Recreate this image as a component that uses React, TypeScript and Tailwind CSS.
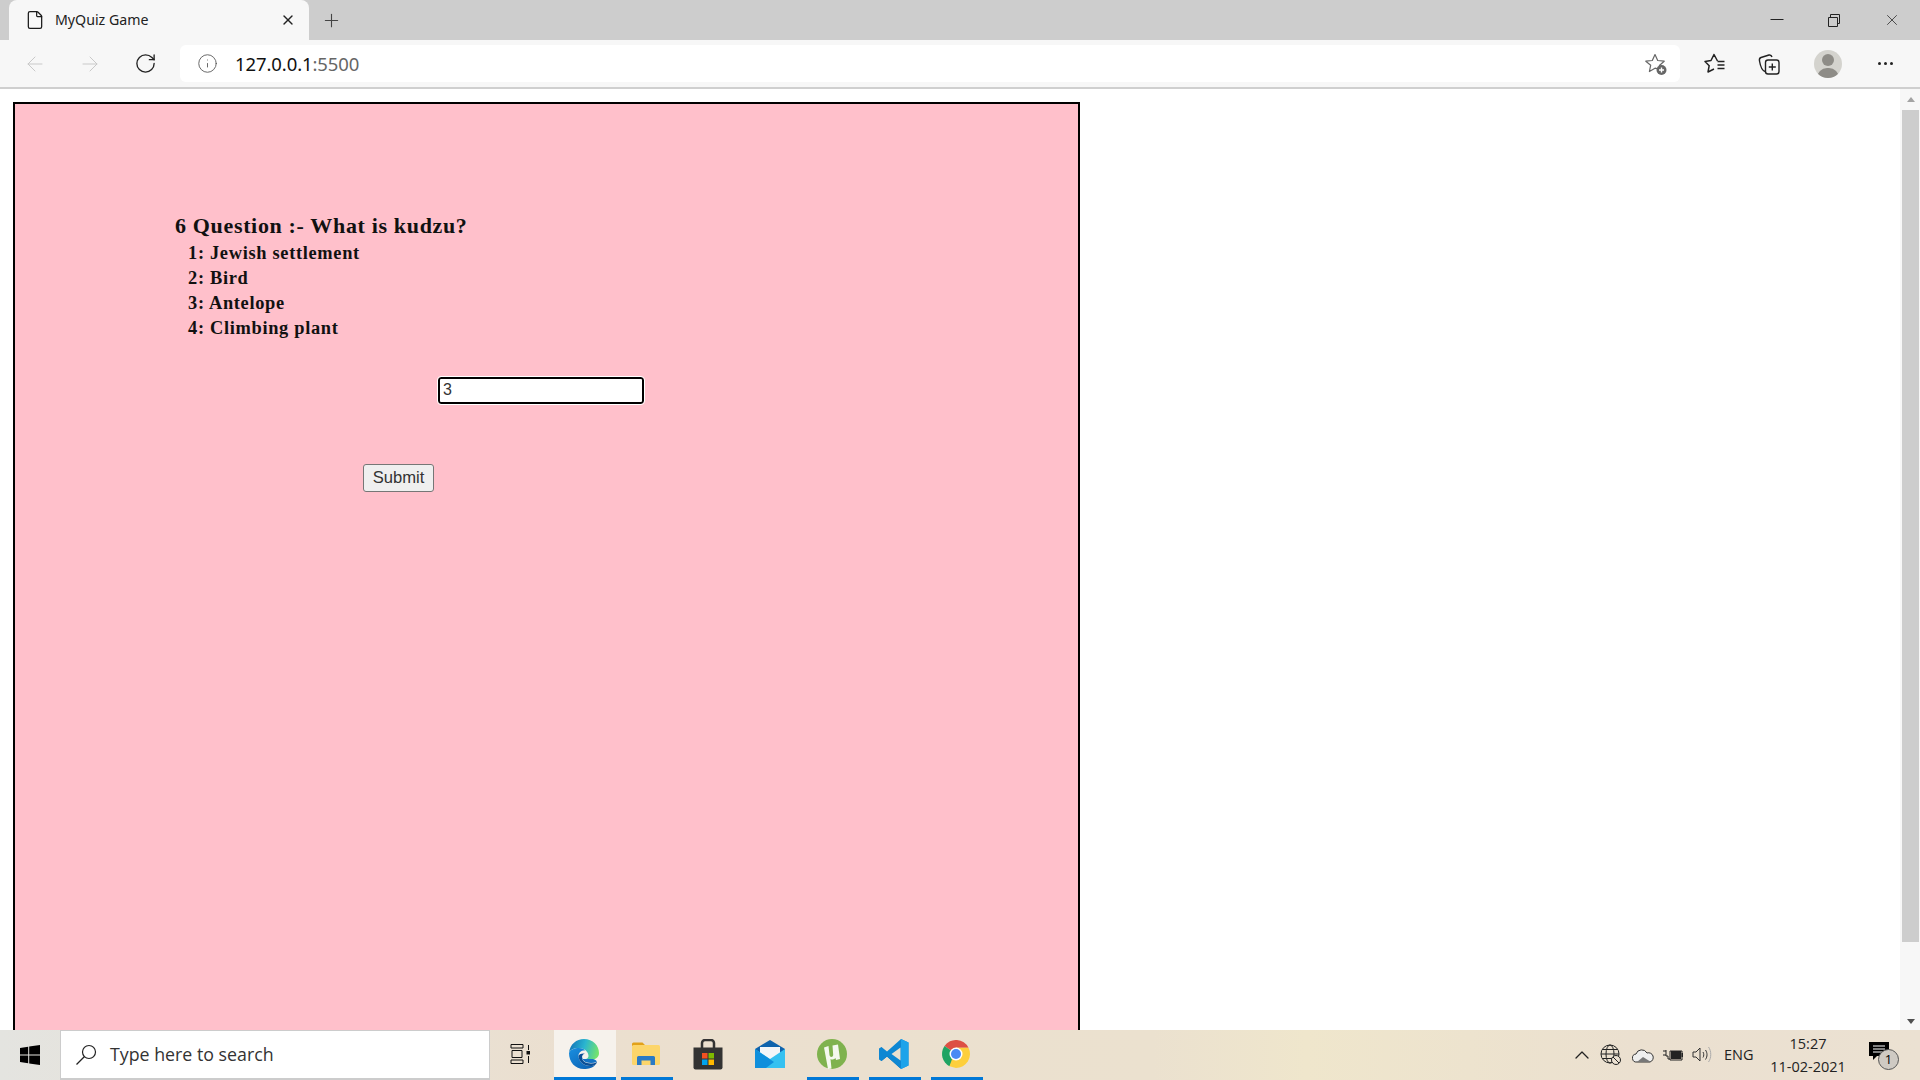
import React from "react";
import { ArrowLeft, ArrowRight, ChevronUp, File, Info, Plus, RotateCw, X } from "lucide-react";

const options = ["1: Jewish settlement", "2: Bird", "3: Antelope", "4: Climbing plant"];

function TabStrip() {
  return (
    <div className="flex h-10 bg-[#cdcdcd] pl-[9px]">
      <div className="flex w-[300px] items-center rounded-t-lg bg-[#f7f7f7] pl-4 pr-[13px]">
        <File size={20} strokeWidth={1.5} className="text-[#1a1a1a]" />
        <span className="ml-[10px] flex-1 text-[14.2px] text-[#222]">MyQuiz Game</span>
        <X size={16} strokeWidth={2} className="text-[#222]" />
      </div>
      <div className="ml-[12px] flex items-center">
        <Plus size={21} strokeWidth={1.25} className="text-[#444]" />
      </div>
      <div className="ml-auto flex items-center text-[#222]">
        <svg width="14" height="14" viewBox="0 0 14 14" className="mr-[43px]">
          <path d="M0.5 6.500h13" stroke="currentColor" strokeWidth="1" />
        </svg>
        <svg width="14" height="14" viewBox="0 0 14 14" className="mr-[42px]">
          <path d="M1.500 4.500h9v9h-9zM3.500 4.500v-3h9v9h-2" fill="none" stroke="currentColor" strokeWidth="1" />
        </svg>
        <X size={18} strokeWidth={1} className="mr-[19px]" />
      </div>
    </div>
  );
}

function Toolbar() {
  return (
    <div className="flex h-[49px] items-start border-b-2 border-[#cfcfcf] bg-[#f7f7f7]">
      <div className="flex h-[47px] w-[180px] items-center pl-[23px]">
        <ArrowLeft size={24} strokeWidth={1} className="text-[#c9c9c9]" />
        <ArrowRight size={24} strokeWidth={1} className="ml-[31px] text-[#c9c9c9]" />
        <RotateCw size={23} strokeWidth={1.4} className="ml-[32px] text-[#222]" />
      </div>
      <div className="mt-[5px] flex h-[37px] w-[1500px] items-center rounded-md bg-white pl-[17px] pr-[12px]">
        <Info size={21} strokeWidth={1} className="text-[#555]" />
        <span className="ml-[17px] flex-1 text-[18.5px] tracking-[-0.1px] text-[#111]">
          127.0.0.1<span className="text-[#666]">:5500</span>
        </span>
        <svg width="24" height="24" viewBox="0 0 24 24" fill="none">
          <path d="M11 2.500l2.700 6 6.500.7-4.800 4.300 1.200 4-5.600-1.300-5.600 3.300 1.300-6.300L1.800 9.200l6.500-.7z" stroke="#666" strokeWidth="1.200" strokeLinejoin="round" />
          <circle cx="17.500" cy="18" r="5" fill="#666" />
          <path d="M15 18h5M17.500 15.500v5" stroke="#fff" strokeWidth="1.400" />
        </svg>
      </div>
      <div className="flex h-[47px] flex-1 items-center pl-[24px] text-[#222]">
        <svg width="22" height="22" viewBox="0 0 22 22" fill="none" stroke="currentColor" strokeWidth="1.500" strokeLinejoin="round">
          <path d="M13.500 8L10 1.500 7 7.500 1 8.500l4.200 4.200L4 19l6-3" />
          <path d="M13.500 8.500h7M13.500 12h7M13.500 15.500h7" />
        </svg>
        <svg width="22" height="24" viewBox="0 0 22 24" fill="none" stroke="currentColor" strokeWidth="1.400" strokeLinejoin="round" className="ml-[32px]">
          <path d="M7 19.500C4 18.500 2.500 15 1.500 9c-.4-2 0-3 1.500-3.500L11 3c1.500-.3 2.500.3 3 2" />
          <rect x="7.500" y="8" width="13.500" height="14" rx="2.500" />
          <path d="M14.300 11.500v7M10.800 15h7" />
        </svg>
        <div className="relative ml-[34px] h-7 w-7 overflow-hidden rounded-full bg-[#d4d3ce]">
          <div className="absolute left-[8px] top-[4px] h-3 w-3 rounded-full bg-[#8e8c87]" />
          <div className="absolute left-[3px] top-[18px] h-5 w-[22px] rounded-full bg-[#8e8c87]" />
        </div>
        <div className="ml-[36px] flex gap-[3px]">
          <span className="h-[3px] w-[3px] rounded-full bg-[#222]" />
          <span className="h-[3px] w-[3px] rounded-full bg-[#222]" />
          <span className="h-[3px] w-[3px] rounded-full bg-[#222]" />
        </div>
      </div>
    </div>
  );
}

function Scrollbar() {
  return (
    <div className="flex w-[20px] shrink-0 flex-col items-center bg-[#f7f7f7] pl-[1px]">
      <div className="flex h-[21px] items-center">
        <div className="h-0 w-0 border-x-[4px] border-b-[5px] border-x-transparent border-b-[#a3a3a3]" />
      </div>
      <div className="h-[832px] w-[17px] bg-[#cdcdcd]" />
      <div className="flex flex-1 items-end pb-[6px]">
        <div className="h-0 w-0 border-x-[4px] border-t-[5px] border-x-transparent border-t-[#505050]" />
      </div>
    </div>
  );
}

function QuizPanel() {
  return (
    <div className="ml-[13px] mt-[13px] h-[1000px] w-[1067px] shrink-0 border-2 border-black bg-[#ffc0cb] pl-[160px] pt-[109px] text-[#111]">
      <h2 className="font-['Liberation_Serif',serif] text-[22px] font-bold leading-[26px] tracking-[0.66px]">
        6 Question :- What is kudzu?
      </h2>
      <div className="mt-[2px] pl-[13px] font-['Liberation_Serif',serif] text-[18.4px] font-bold leading-[25px] tracking-[0.68px]">
        {options.map((o) => (
          <div key={o}>{o}</div>
        ))}
      </div>
      <input
        readOnly
        value="3"
        className="ml-[263px] mt-[36px] block h-[27px] w-[206px] rounded-[3px] border-2 border-black bg-white pb-[2px] pl-[3px] font-['Liberation_Sans',sans-serif] text-[16px] text-[#333] outline outline-1 outline-white"
      />
      <button className="ml-[188px] mt-[60px] block h-[28px] w-[71px] rounded-[3px] border border-[#767676] bg-[#efefef] font-['Liberation_Sans',sans-serif] text-[16.6px] text-[#333]">
        Submit
      </button>
    </div>
  );
}

function EdgeIcon() {
  return (
    <svg width="32" height="32" viewBox="0 0 32 32">
      <defs>
        <linearGradient id="edgeTop" x1="0" y1="0.300" x2="1" y2="0.500">
          <stop offset="0" stopColor="#1273b8" />
          <stop offset="0.500" stopColor="#2ab5d0" />
          <stop offset="1" stopColor="#74e36c" />
        </linearGradient>
        <linearGradient id="edgeLow" x1="0" y1="0" x2="0.800" y2="1">
          <stop offset="0" stopColor="#1a8fe0" />
          <stop offset="1" stopColor="#0d63b4" />
        </linearGradient>
      </defs>
      <path d="M1 15C2 6 8.500 1 16 1c9 0 15 6.500 15 14 0 4-3 6.500-7 6.500H15c2.500 0 5.500-1 5.500-3.500 0-4-4-8-9.500-8S2 12 1 15z" fill="url(#edgeTop)" />
      <path d="M1 15c1-3 5-5 10-5 3 0 5 1 6 2.500-3-.5-6.500 1.500-6.500 5.500 0 5 5 10 12 10 2 0 3.500-.5 5-1.500C25 30 20.500 31 16 31 7 31 1 24 1 15z" fill="url(#edgeLow)" />
      <path d="M10.500 18c0 5 5 10 12 10 2 0 3.500-.5 5-1.500 1-1 1.500-2 1.500-2.500-2 1-4 1.500-6 1.500-6 0-9-3-9-6 0-2 1-3.500 3-4-3.500-.5-6.500 1-6.500 2.500z" fill="#0b4f96" />
      <path d="M14 19c0 3 3 6 9 6 2 0 4-.5 6-1.500-1.500-2-3.500-2.500-5.500-2.500H15z" fill="#1272c4" />
    </svg>
  );
}

function FolderIcon() {
  return (
    <svg width="28" height="24" viewBox="0 0 28 24">
      <path d="M0 2A1.500 1.500 0 011.500.5h9L14 4H0z" fill="#e2a11a" />
      <rect x="0" y="3" width="28" height="20" rx="1.500" fill="#fcd56a" />
      <path d="M5 23v-7.500A1.500 1.500 0 016.500 14h15a1.500 1.500 0 011.500 1.500V23h-4.500v-4.500h-9V23z" fill="#2a7ac4" />
    </svg>
  );
}

function StoreIcon() {
  return (
    <svg width="30" height="31" viewBox="0 0 30 31">
      <path d="M9 9V4a3 3 0 013-3h6a3 3 0 013 3v5" fill="none" stroke="#333" strokeWidth="2.500" />
      <path d="M.5 8.500h29v20a2 2 0 01-2 2h-25a2 2 0 01-2-2z" fill="#333" />
      <rect x="9" y="14" width="5.500" height="5.500" fill="#f25022" />
      <rect x="15.500" y="14" width="5.500" height="5.500" fill="#7fba00" />
      <rect x="9" y="20.500" width="5.500" height="5.500" fill="#00a4ef" />
      <rect x="15.500" y="20.500" width="5.500" height="5.500" fill="#ffb900" />
    </svg>
  );
}

function MailIcon() {
  return (
    <svg width="30" height="28" viewBox="0 0 30 28">
      <path d="M0 9L15 0l15 9v19H0z" fill="#0f63ad" />
      <path d="M5 7h20v10l-10 6-10-6z" fill="#f4f6f8" />
      <path d="M0 9l15 10 15-10v19H0z" fill="#35c1f1" />
      <path d="M0 9l19 13-8 6H0z" fill="#0f8fdc" />
    </svg>
  );
}

function TorrentIcon() {
  return (
    <svg width="30" height="30" viewBox="0 0 30 30">
      <circle cx="15" cy="15" r="15" fill="#7fb24e" />
      <path d="M7 8.500l4.500-1.500 1 9c.3 2.500 3.500 2.500 3.700 0l-.7-9.500L21 5.500l2 14.500-4 1-.5-2c-1.500 1.500-3.500 2-5 1l1 9.500-3.500.5z" fill="#f4f8ee" />
    </svg>
  );
}

function CodeIcon() {
  return (
    <svg width="30" height="30" viewBox="0 0 30 30">
      <path d="M1 9.500L2.500 8.500l19 17.500v3.500L8 17.500 2.500 22 1 20.500z" fill="#0a66a8" />
      <path d="M22 0L8 12.500 2.500 8 0 9.500v11L2.500 22 8 17.500 22 30l7.500-3.500v-23zM21.500 8.500v13L12.500 15z" fill="#0e87d3" />
      <path d="M22 0l7.500 3.500v23L22 30z" fill="#1da3ea" />
    </svg>
  );
}

function ChromeIcon() {
  return (
    <svg width="28" height="28" viewBox="0 0 28 28">
      <path d="M14 14L2.500 6A14 14 0 0126.500 7.700H14z" fill="#dd5044" />
      <path d="M14 14l-6.500 12.300A14 14 0 012.500 6z" fill="#1fa463" />
      <path d="M14 7.700h12.500A14 14 0 0114 28l-6.500-1.700z" fill="#fdcf3c" />
      <circle cx="14" cy="14" r="6.500" fill="#fff" />
      <circle cx="14" cy="14" r="5" fill="#4a8af4" />
    </svg>
  );
}

const apps: { icon: React.ReactNode; open?: boolean; active?: boolean }[] = [
  { icon: <EdgeIcon />, open: true, active: true },
  { icon: <FolderIcon />, open: true },
  { icon: <StoreIcon /> },
  { icon: <MailIcon /> },
  { icon: <TorrentIcon />, open: true },
  { icon: <CodeIcon />, open: true },
  { icon: <ChromeIcon />, open: true },
];

function Taskbar() {
  return (
    <div className="flex h-[50px] shrink-0 items-stretch bg-[linear-gradient(90deg,#e4e4e0_0%,#ebdfcf_30%,#ebe1cf_60%,#efe6cc_68%,#ebe0d0_85%,#ebe1d2_100%)] font-['Open_Sans',sans-serif]">
      <div className="flex w-[60px] items-center justify-center">
        <svg width="20" height="20" viewBox="0 0 20 20" fill="#000">
          <path d="M0 2.900l8.200-1.100v7.800H0zM9.200 1.600L20 0v9.600H9.200zM0 10.500h8.200v7.800L0 17.100zM9.200 10.500H20V20L9.200 18.500z" />
        </svg>
      </div>
      <div className="flex w-[430px] items-center border border-b-2 border-[#cccccc] bg-white pl-[14px]">
        <svg width="22" height="22" viewBox="0 0 22 22" fill="none" stroke="#222" strokeWidth="1.200">
          <circle cx="14" cy="8" r="6.500" />
          <path d="M9.500 12.500L1.500 20.500" />
        </svg>
        <span className="ml-[13px] text-[17.800px] text-[#333]">Type here to search</span>
      </div>
      <div className="flex w-[60px] items-center justify-center pb-[2px]">
        <svg width="20" height="20" viewBox="0 0 20 20" fill="none" stroke="#111" strokeWidth="1">
          <path d="M1 .500h12M1 4h12M2 6.500h10v7H2zM1 16h12M1 19.500h12M1 .500V4M13 .500V4M1 16v3.500M13 16v3.500" />
          <path d="M18.500 1v5M18.500 12v7" />
          <rect x="16.500" y="7" width="3.500" height="3.500" fill="#111" stroke="none" />
        </svg>
      </div>
      <div className="ml-[4px] flex">
        {apps.map((a, i) => (
          <div key={i} className={`relative flex w-[62px] items-center justify-center pb-[2px] pr-[2px] ${a.active ? "bg-[#f6f2ec]" : ""}`}>
            {a.icon}
            {a.open && (
              <div className={`absolute bottom-0 h-[3px] bg-[#0078d7] ${a.active ? "inset-x-0" : "inset-x-[5px]"}`} />
            )}
          </div>
        ))}
      </div>
      <div className="ml-auto flex items-center text-[#222]">
        <ChevronUp size={24} strokeWidth={1.3} />
        <svg width="22" height="22" viewBox="0 0 22 22" fill="none" stroke="#222" strokeWidth="1" className="ml-[6px]">
          <circle cx="10" cy="10" r="9" />
          <ellipse cx="10" cy="10" rx="4" ry="9" />
          <path d="M1 10h18M2.500 5.500h15M2.500 14.500h15" />
          <circle cx="16" cy="16" r="4.500" fill="#ece1d2" />
          <path d="M13 13l6 6" />
        </svg>
        <svg width="22" height="15" viewBox="0 0 22 15" className="ml-[10px]">
          <path d="M5 14a4 4 0 01-1-8 6 6 0 0111-1 4.500 4.500 0 013 9z" fill="#eee" stroke="#333" strokeWidth="1" />
          <path d="M5 14l6-5 8 5z" fill="#777" />
        </svg>
        <svg width="20" height="14" viewBox="0 0 20 14" className="ml-[9px]">
          <path d="M0 3h3M0 7h3M3 2v6h2v3h2M7 3h12v9H7z" fill="none" stroke="#222" strokeWidth="1" />
          <rect x="8" y="3" width="10" height="8" fill="#222" />
          <rect x="18.500" y="5" width="1.500" height="4" fill="#222" />
        </svg>
        <svg width="20" height="18" viewBox="0 0 20 18" fill="none" stroke="#333" strokeWidth="1" className="ml-[9px]">
          <path d="M1 6h3l4-4v13l-4-4H1z" />
          <path d="M11 6c1 1.500 1 4 0 5.500M13.500 4c2 3 2 6.500 0 9.500" />
          <path d="M16.500 1c3 4 3 11 0 15" stroke="#aaa" />
        </svg>
        <span className="ml-[12px] w-[30px] text-[14.500px]">ENG</span>
        <div className="ml-[16px] flex w-[76px] flex-col items-center text-[14.500px] leading-[23px]">
          <span>15:27</span>
          <span>11-02-2021</span>
        </div>
        <div className="relative ml-[22px] mr-[20px] h-[26px] w-[32px]">
          <svg width="20" height="19" viewBox="0 0 20 19" className="absolute left-[1px] top-0">
            <path d="M0 0h20v14H8l-4 4v-4H0z" fill="#000" />
            <path d="M4 4h12M4 7h12M4 10h12" stroke="#fff" strokeWidth="1" />
          </svg>
          <div className="absolute left-[10px] top-[7px] flex h-[21px] w-[21px] items-center justify-center rounded-full border border-[#555] bg-[#cfcac3] text-[13px] leading-none text-black">
            1
          </div>
        </div>
      </div>
    </div>
  );
}

export default function App() {
  return (
    <div className="flex h-screen flex-col overflow-hidden bg-white font-['Noto_Sans',sans-serif]">
      <TabStrip />
      <Toolbar />
      <div className="flex min-h-0 flex-1">
        <div className="flex-1 overflow-hidden">
          <QuizPanel />
        </div>
        <Scrollbar />
      </div>
      <Taskbar />
    </div>
  );
}
